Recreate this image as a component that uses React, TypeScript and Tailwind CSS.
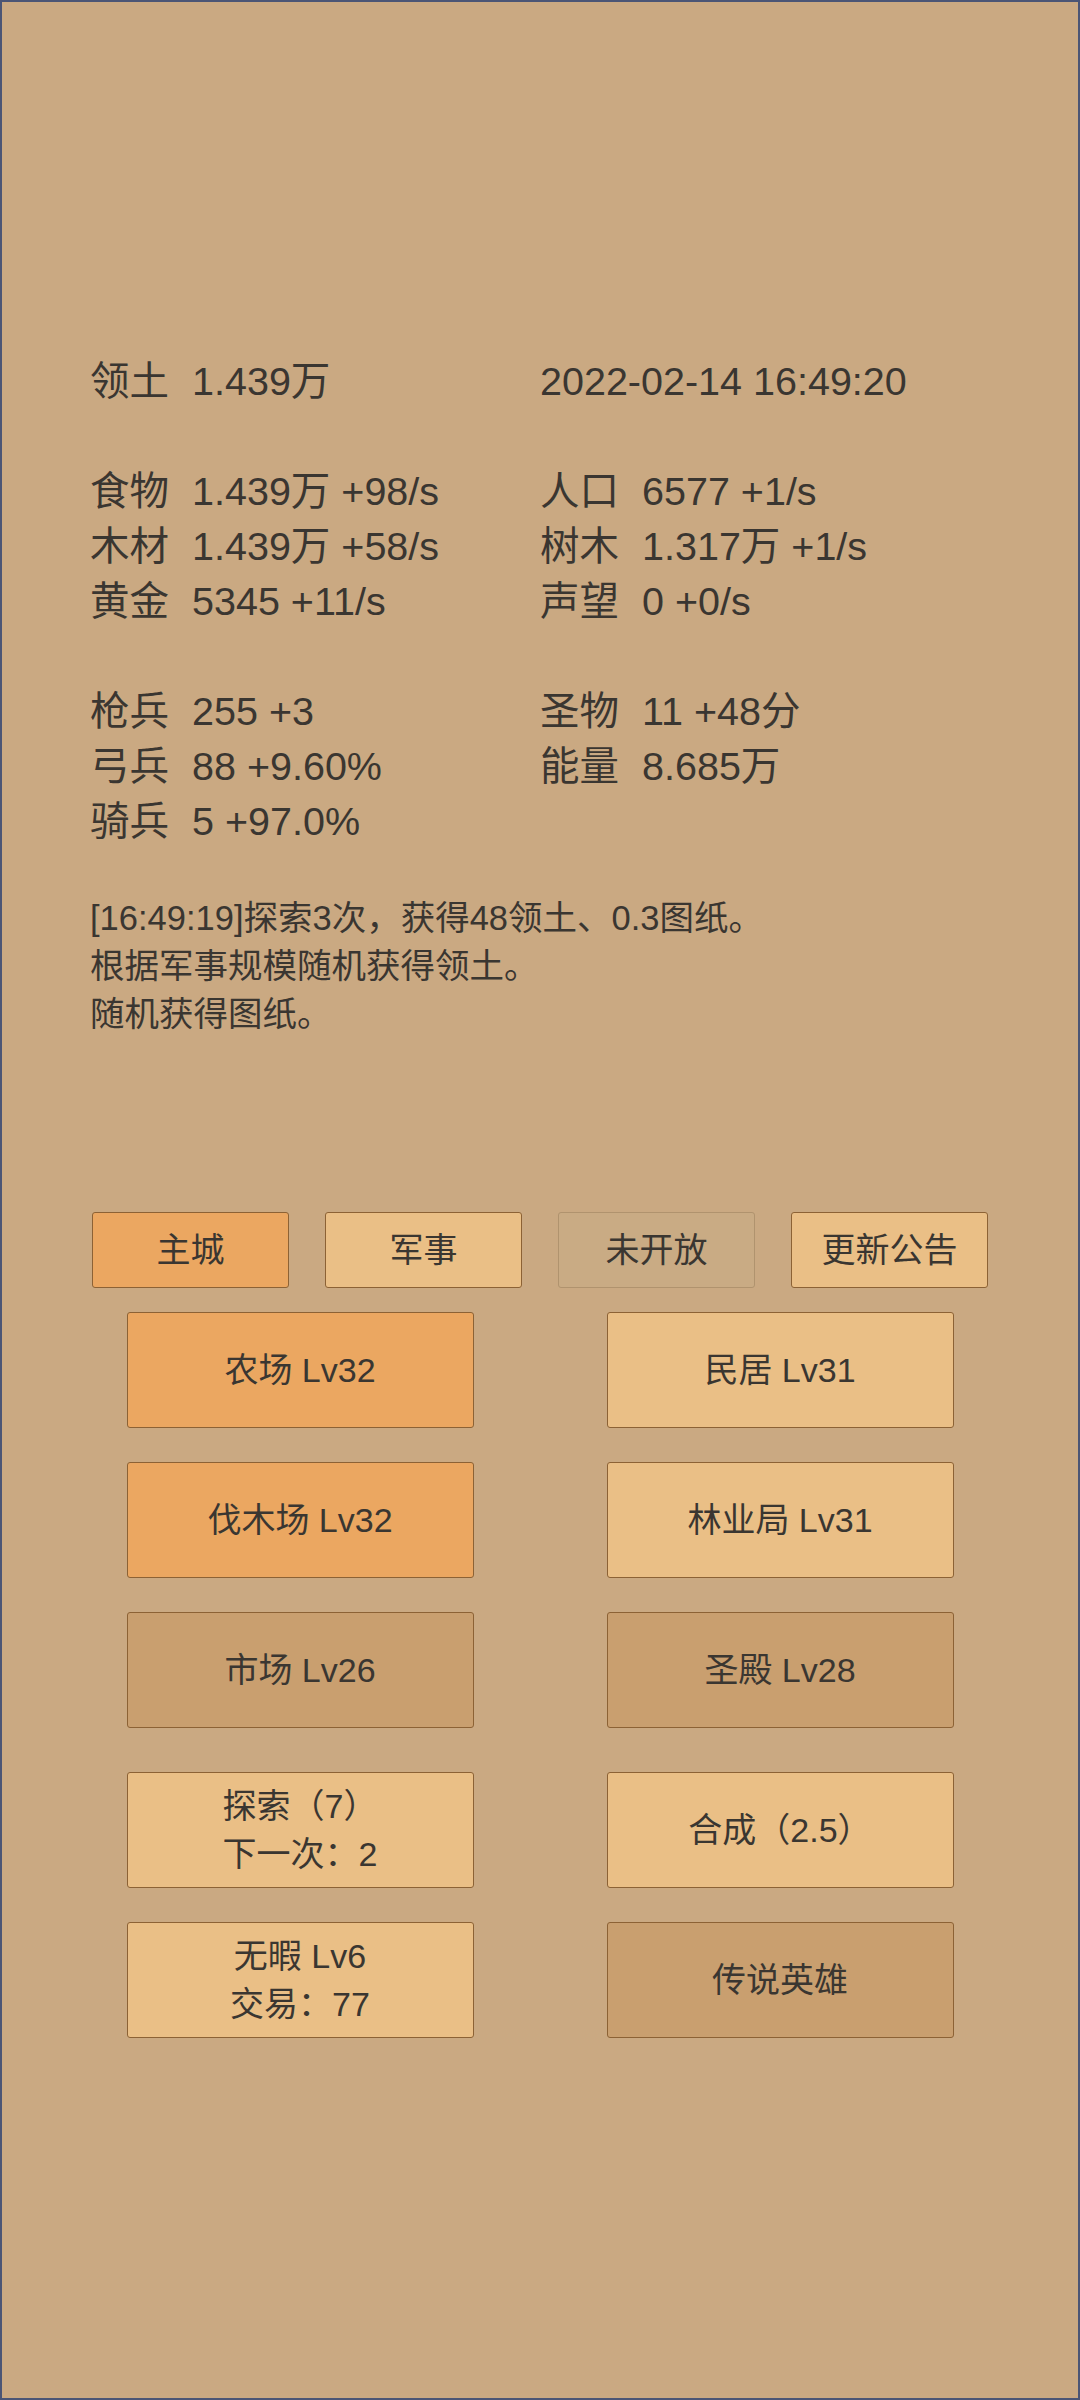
import React from 'react';

type Stat = { label: string; value: string };

const leftStats: (Stat | null)[] = [
  { label: '领土', value: '1.439万' },
  null,
  { label: '食物', value: '1.439万 +98/s' },
  { label: '木材', value: '1.439万 +58/s' },
  { label: '黄金', value: '5345 +11/s' },
  null,
  { label: '枪兵', value: '255 +3' },
  { label: '弓兵', value: '88 +9.60%' },
  { label: '骑兵', value: '5 +97.0%' },
];

const rightStats: (Stat | string | null)[] = [
  '2022-02-14 16:49:20',
  null,
  { label: '人口', value: '6577 +1/s' },
  { label: '树木', value: '1.317万 +1/s' },
  { label: '声望', value: '0 +0/s' },
  null,
  { label: '圣物', value: '11 +48分' },
  { label: '能量', value: '8.685万' },
];

const tabs = [
  { name: '主城', cls: 'bg-[#eba761] border-[#8c6235]' },
  { name: '军事', cls: 'bg-[#eabf86] border-[#8c6235]' },
  { name: '未开放', cls: 'bg-[#c9ab84] border-[#b0936e]' },
  { name: '更新公告', cls: 'bg-[#eabf86] border-[#8c6235]' },
];

const orange = 'bg-[#eba761]';
const light = 'bg-[#eabf86]';
const dark = 'bg-[#c99f6f]';

const StatLine = ({ item }: { item: Stat | string | null }) => {
  if (item === null) return <div className="h-[55px]" />;
  if (typeof item === 'string') return <div className="h-[55px]">{item}</div>;
  return (
    <div className="h-[55px] flex">
      <span className="w-[102px]">{item.label}</span>
      <span>{item.value}</span>
    </div>
  );
};

const Btn = ({ color, lines }: { color: string; lines: string[] }) => (
  <div
    className={`w-[347px] h-[116px] rounded-[3px] border border-[#8c6235] ${color} flex flex-col items-center justify-center text-[34px] leading-[48px] text-[#3a3631]`}
  >
    {lines.map(l => (
      <div key={l}>{l}</div>
    ))}
  </div>
);

export default function App() {
  return (
    <div
      className="w-[1080px] h-[2400px] bg-[#caa982] border-2 border-[#4b5575] text-[#3a3631]"
      style={{ fontFamily: '"Liberation Sans", "Noto Sans CJK SC", sans-serif' }}
    >
      {/* stats */}
      <div className="pt-[352px] pl-[88px] flex text-[39.5px] leading-[55px]">
        <div className="w-[450px]">
          {leftStats.map((s, i) => (
            <StatLine key={i} item={s} />
          ))}
        </div>
        <div>
          {rightStats.map((s, i) => (
            <StatLine key={i} item={s} />
          ))}
        </div>
      </div>

      {/* log */}
      <div className="mt-[45px] pl-[88px] text-[34.5px] leading-[48px]">
        <div>[16:49:19]探索3次，获得48领土、0.3图纸。</div>
        <div>根据军事规模随机获得领土。</div>
        <div>随机获得图纸。</div>
      </div>

      {/* tabs */}
      <div className="mt-[174px] px-[90px] flex justify-between">
        {tabs.map(t => (
          <div
            key={t.name}
            className={`w-[197px] h-[76px] rounded-[3px] border ${t.cls} flex items-center justify-center text-[34px]`}
          >
            {t.name}
          </div>
        ))}
      </div>

      {/* buildings */}
      <div className="mt-[24px] px-[58px] grid grid-cols-2 justify-items-center gap-y-[34px]">
        <Btn color={orange} lines={['农场 Lv32']} />
        <Btn color={light} lines={['民居 Lv31']} />
        <Btn color={orange} lines={['伐木场 Lv32']} />
        <Btn color={light} lines={['林业局 Lv31']} />
        <Btn color={dark} lines={['市场 Lv26']} />
        <Btn color={dark} lines={['圣殿 Lv28']} />
      </div>

      <div className="mt-[44px] px-[58px] grid grid-cols-2 justify-items-center gap-y-[34px]">
        <Btn color={light} lines={['探索（7）', '下一次：2']} />
        <Btn color={light} lines={['合成（2.5）']} />
        <Btn color={light} lines={['无暇 Lv6', '交易：77']} />
        <Btn color={dark} lines={['传说英雄']} />
      </div>
    </div>
  );
}
